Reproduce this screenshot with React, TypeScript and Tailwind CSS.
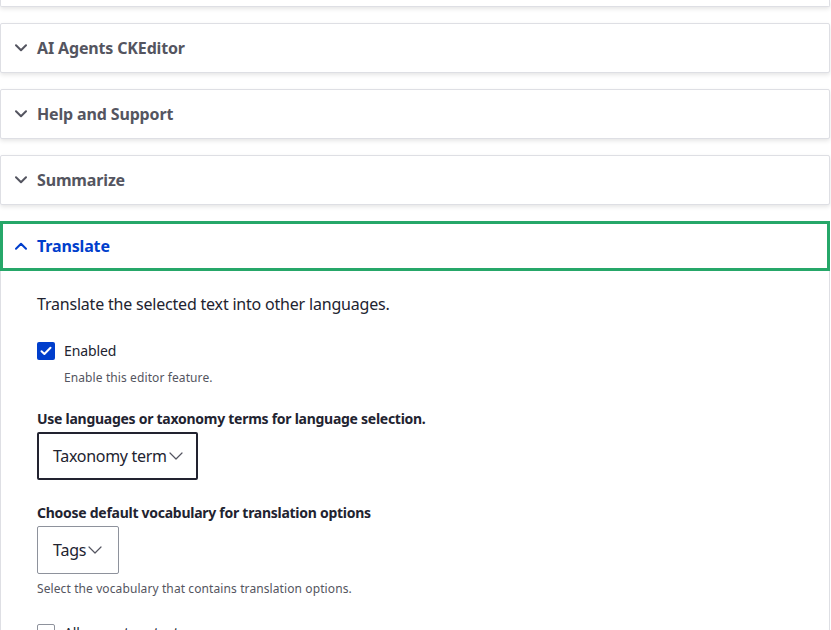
import React from "react";

const font = { fontFamily: "'Noto Sans', Roboto, sans-serif" };

function Chevron({ up, color }: { up?: boolean; color: string }) {
  return (
    <svg width="12" height="8" viewBox="0 0 12 8" fill="none" className="shrink-0">
      <path
        d={up ? "M1 6.8 L6 1.8 L11 6.8" : "M1 1.2 L6 6.2 L11 1.2"}
        stroke={color}
        strokeWidth="2"
        strokeLinecap="round"
        strokeLinejoin="round"
      />
    </svg>
  );
}

function SelectChevron() {
  return (
    <svg width="14" height="8" viewBox="0 0 14 8" fill="none" className="shrink-0">
      <path d="M1 1 L7 7 L13 1" stroke="#545560" strokeWidth="1.2" strokeLinecap="round" strokeLinejoin="round" />
    </svg>
  );
}

function ClosedCard({ title }: { title: string }) {
  return (
    <div className="mb-4 w-[830px] rounded-[2px] border border-[#dedfe4] bg-white shadow-[0_2px_4px_rgba(0,0,0,0.1)]">
      <div className="flex h-[48px] items-center gap-[10px] pl-[14px]">
        <Chevron color="#545560" />
        <span className="text-[16px] font-bold leading-6 tracking-[-0.15px] text-[#545560]">{title}</span>
      </div>
    </div>
  );
}

export default function App() {
  return (
    <div className="h-[630px] w-[831px] overflow-hidden bg-white" style={font}>
      <div className="mb-4 h-[7px] w-[830px] rounded-b-[2px] border-x border-b border-[#dedfe4] bg-white shadow-[0_2px_4px_rgba(0,0,0,0.1)]" />
      <ClosedCard title="AI Agents CKEditor" />
      <ClosedCard title="Help and Support" />
      <ClosedCard title="Summarize" />
      <div className="w-[830px] rounded-t-[2px] border-x border-t border-[#dedfe4] bg-white">
        <div className="-mx-px -mt-px flex h-[50px] items-center gap-[10px] pl-[15px] shadow-[inset_0_0_0_3px_#26a769]">
          <Chevron up color="#003ecc" />
          <span className="text-[16px] font-bold leading-6 tracking-[-0.15px] text-[#003ecc]">Translate</span>
        </div>
        <div className="pl-[36px] text-[#222330]">
          <p className="mt-[21px] text-[16px] leading-6 tracking-[-0.2px]">Translate the selected text into other languages.</p>
          <label className="mt-[23px] flex h-[24px] items-center gap-[9px]">
            <span className="flex h-[18px] w-[18px] items-center justify-center rounded-[2px] bg-[#003ecc]">
              <svg width="12" height="10" viewBox="0 0 12 10" fill="none">
                <path d="M1.5 5.2 L4.4 8 L10.5 1.8" stroke="white" strokeWidth="2" strokeLinecap="round" strokeLinejoin="round" />
              </svg>
            </span>
            <span className="text-[14px] leading-5 tracking-[-0.1px]">Enabled</span>
          </label>
          <p className="mt-[6px] pl-[27px] text-[12px] leading-[18px] tracking-[0.1px] text-[#545560]">Enable this editor feature.</p>
          <p className="mt-[22px] text-[14px] font-bold leading-5 tracking-[-0.27px]">Use languages or taxonomy terms for language selection.</p>
          <div className="mt-[3px] flex h-[48px] w-[161px] items-center gap-[2px] rounded-[2px] border-2 border-[#222330] pl-[14px]">
            <span className="text-[16px] leading-6 tracking-[-0.3px]">Taxonomy term</span>
            <SelectChevron />
          </div>
          <p className="mt-[23px] text-[14px] font-bold leading-5 tracking-[-0.27px]">Choose default vocabulary for translation options</p>
          <div className="mt-[3px] flex h-[48px] w-[82px] items-center gap-[2px] rounded-[2px] border border-[#8e929c] pl-[15px]">
            <span className="text-[16px] leading-6 tracking-[-0.2px]">Tags</span>
            <SelectChevron />
          </div>
          <p className="mt-[6px] text-[12px] leading-[18px] tracking-[0.1px] text-[#545560]">Select the vocabulary that contains translation options.</p>
          <label className="mt-[23px] flex h-[24px] items-center gap-[9px]">
            <span className="h-[18px] w-[18px] rounded-[2px] border border-[#8e929c] bg-white" />
            <span className="text-[14px] leading-5 tracking-[-0.1px]">Allow custom text</span>
          </label>
          <div className="h-[40px]" />
        </div>
      </div>
    </div>
  );
}
